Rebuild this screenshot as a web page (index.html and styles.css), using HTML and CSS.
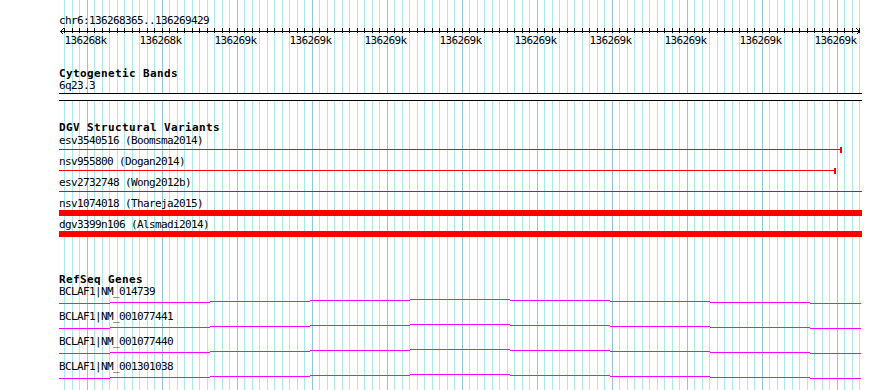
FILE: index.html
```html
<!DOCTYPE html>
<html>
<head>
    <title>chr6:136268365..136269429</title>
    <link rel="stylesheet" href="styles.css">
</head>
<body>
<div class="panel">
    <!-- ruler -->
    <div class="locus">chr6:136268365..136269429</div>
    <svg class="axis" width="803" height="8">
        <path d="M1 4.5H801 M1.5 4.5L4.5 1.5 M1.5 4.5L4.5 7.5 M800.5 4.5L797.5 1.5 M800.5 4.5L797.5 7.5" stroke="#000" stroke-width="1" fill="none" shape-rendering="crispEdges"/>
    </svg>
    <div class="tick-labels">
        <span>136268k</span><span>136268k</span><span>136269k</span><span>136269k</span><span>136269k</span><span>136269k</span><span>136269k</span><span>136269k</span><span>136269k</span><span>136269k</span><span>136269k</span>
    </div>

    <div class="track cyto">
        <div class="track-title">Cytogenetic Bands</div>
        <div class="feat-label">6q23.3</div>
        <div class="band"></div>
    </div>

    <div class="track dgv">
        <div class="track-title">DGV Structural Variants</div>
        <div class="sv-row">
            <div class="feat-label">esv3540516 (Boomsma2014)</div>
            <div class="sv-glyph"><div class="sv-line" style="width:781px"></div><div class="sv-cap"></div></div>
        </div>
        <div class="sv-row">
            <div class="feat-label">nsv955800 (Dogan2014)</div>
            <div class="sv-glyph"><div class="sv-line" style="width:775px"></div><div class="sv-cap"></div></div>
        </div>
        <div class="sv-row">
            <div class="feat-label">esv2732748 (Wong2012b)</div>
            <div class="sv-glyph"><div class="sv-line" style="width:803px"></div></div>
        </div>
        <div class="sv-row">
            <div class="feat-label">nsv1074018 (Thareja2015)</div>
            <div class="sv-glyph"><div class="sv-bar"></div></div>
        </div>
        <div class="sv-row">
            <div class="feat-label">dgv3399n106 (Alsmadi2014)</div>
            <div class="sv-glyph"><div class="sv-bar"></div></div>
        </div>
    </div>

    <div class="track refseq">
        <div class="track-title">RefSeq Genes</div>
        <div class="gene-row">
            <div class="feat-label">BCLAF1|NM_014739</div>
            <svg class="intron" width="803" height="13"><path d="M0 5.5H51M51 4.5H151M151 3.5H251M251 2.5H351M351 1.5H451M451 2.5H551M551 3.5H651M651 4.5H751M751 5.5H802"/></svg>
        </div>
        <div class="gene-row">
            <div class="feat-label">BCLAF1|NM_001077441</div>
            <svg class="intron" width="803" height="13"><path d="M0 5.5H51M51 4.5H151M151 3.5H251M251 2.5H351M351 1.5H451M451 2.5H551M551 3.5H651M651 4.5H751M751 5.5H802"/></svg>
        </div>
        <div class="gene-row">
            <div class="feat-label">BCLAF1|NM_001077440</div>
            <svg class="intron" width="803" height="13"><path d="M0 5.5H51M51 4.5H151M151 3.5H251M251 2.5H351M351 1.5H451M451 2.5H551M551 3.5H651M651 4.5H751M751 5.5H802"/></svg>
        </div>
        <div class="gene-row">
            <div class="feat-label">BCLAF1|NM_001301038</div>
            <svg class="intron" width="803" height="13"><path d="M0 5.5H51M51 4.5H151M151 3.5H251M251 2.5H351M351 1.5H451M451 2.5H551M551 3.5H651M651 4.5H751M751 5.5H802"/></svg>
        </div>
    </div>
</div>
</body>
</html>
```

FILE: styles.css
```css
body {
    margin: 0;
    background: #fff;
    color: #000;
    font-family: "DejaVu Sans Mono", "Liberation Mono", monospace;
    font-size: 11px;
    line-height: 12px;
    letter-spacing: -0.62px;
}
.panel {
    margin-left: 59px;
    width: 803px;
    height: 390px;
    padding-top: 15px;
    box-sizing: border-box;
    overflow: hidden;
    /* major grid every 100bp, minor every 10bp */
    background:
        repeating-linear-gradient(90deg, #8cc8e6 0 1px, transparent 1px 75px) 28px 0 / 800px 100% no-repeat,
        repeating-linear-gradient(90deg, #aaeaea 0 1px, transparent 1px 7.5px) -2px 0 / 830px 100% no-repeat;
}
.locus {
    height: 12px;
    white-space: nowrap;
}
.axis {
    display: block;
    background: repeating-linear-gradient(90deg, #000 0 1px, transparent 1px 7.5px) -2px 1px / 830px 5px no-repeat;
}
.tick-labels {
    display: flex;
    height: 12px;
    margin-left: -11px;
    white-space: nowrap;
}
.tick-labels span {
    flex: none;
    width: 75px;
    text-align: center;
}
.track-title {
    font-weight: bold;
    letter-spacing: 0.38px;
    height: 12px;
    white-space: nowrap;
}
.feat-label {
    height: 12px;
    white-space: nowrap;
}
.cyto {
    margin-top: 21px;
}
.band {
    margin-top: 1px;
    height: 6px;
    border-top: 1px solid #000;
    border-bottom: 1px solid #000;
    background: #fff;
}
.dgv {
    margin-top: 21px;
}
.dgv .track-title {
    margin-bottom: 1px;
}
.sv-row {
    height: 21px;
}
.sv-glyph {
    display: flex;
    height: 6px;
}
.sv-line {
    flex: none;
    height: 1px;
    margin-top: 2px;
    background: #f00;
}
.sv-cap {
    flex: none;
    width: 2px;
    height: 6px;
    background: #f00;
}
.sv-bar {
    flex: 1;
    height: 6px;
    background: #f00;
}
.refseq {
    margin-top: 34px;
}
.gene-row {
    height: 25px;
}
.intron {
    display: block;
}
.intron path {
    fill: none;
    stroke: #f0f;
    stroke-width: 1;
    shape-rendering: crispEdges;
}
```
